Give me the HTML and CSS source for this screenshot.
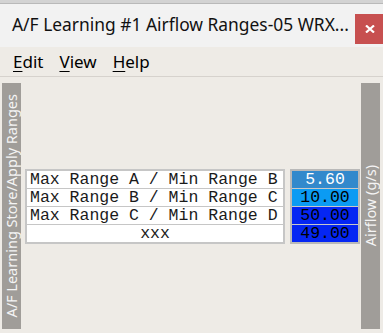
FILE: index.html
```html
<!DOCTYPE html>
<html>
<head>
<meta charset="utf-8">
<link rel="stylesheet" href="styles.css">
</head>
<body>
<div class="window">
  <div class="topstrip"></div>
  <div class="titlebar">
    <span class="title">A/F Learning #1 Airflow Ranges-05 WRX...</span>
    <div class="close"><svg width="10" height="8" viewBox="0 0 10 8"><path d="M1 0.5 L9 7.5 M9 0.5 L1 7.5" stroke="#fff" stroke-width="2.2"/></svg></div>
  </div>
  <div class="menubar">
    <span class="menuitem"><u>E</u>dit</span>
    <span class="menuitem"><u>V</u>iew</span>
    <span class="menuitem"><u>H</u>elp</span>
  </div>
  <div class="content">
    <div class="vbar"><span class="vtext">A/F Learning Store/Apply Ranges</span></div>
    <div class="middle">
      <div class="labels">
        <div class="row">Max Range A / Min Range B</div>
        <div class="row">Max Range B / Min Range C</div>
        <div class="row">Max Range C / Min Range D</div>
        <div class="row center">xxx</div>
      </div>
      <div class="values">
        <div class="val v1">5.60</div>
        <div class="val v2">10.00</div>
        <div class="val v3">50.00</div>
        <div class="val v3">49.00</div>
      </div>
    </div>
    <div class="vbar"><span class="vtext">Airflow (g/s)</span></div>
  </div>
</div>
</body>
</html>
```

FILE: styles.css
```css
html, body {
  margin: 0;
  padding: 0;
  background: #eeebe6;
}
.window {
  width: 383px;
  height: 333px;
  overflow: hidden;
  display: flex;
  flex-direction: column;
  font-family: "Noto Sans", "Open Sans", sans-serif;
}
.topstrip {
  height: 3px;
  background: #d3d3d3;
  border-bottom: 1px solid #b9b9b9;
}
.titlebar {
  height: 43px;
  background: #f2f2f2;
  display: flex;
  align-items: flex-start;
}
.title {
  padding-left: 12px;
  margin-top: 8px;
  font-size: 17.4px;
  line-height: 24px;
  color: #111;
  white-space: nowrap;
}
.close {
  margin-left: auto;
  margin-top: 10px;
  width: 28px;
  height: 30px;
  background: #c75050;
  display: flex;
  align-items: center;
  justify-content: center;
}
.close svg {
  display: block;
  margin-left: 2px;
}
.menubar {
  height: 29px;
  border-bottom: 1px solid #d6d2cd;
  display: flex;
  align-items: flex-start;
  padding-left: 5px;
}
.menuitem {
  font-size: 17px;
  line-height: 24px;
  margin-top: 3px;
  padding: 0 8px;
  color: #000;
}
.menuitem u {
  text-decoration-thickness: 1px;
  text-underline-offset: 3px;
}
.content {
  flex: 1;
  display: flex;
  padding: 6px 3px 4px 2px;
}
.vbar {
  width: 19px;
  background: #a09d99;
  display: flex;
  align-items: center;
  justify-content: center;
}
.vtext {
  writing-mode: vertical-rl;
  transform: rotate(180deg);
  color: #f4f4f4;
  font-size: 14.5px;
  line-height: 19px;
  white-space: nowrap;
}
.middle {
  flex: 1;
  display: flex;
  align-items: center;
  padding-left: 4px;
  padding-right: 1px;
  font-family: "Liberation Mono", "Courier New", monospace;
  font-size: 16.5px;
}
.labels {
  width: 256px;
  border: 2px solid #c6c6c6;
  background: #fff;
}
.row {
  height: 17px;
  line-height: 17px;
  padding-left: 3px;
  border-top: 1px solid #c6c6c6;
  white-space: nowrap;
  color: #1a1a1a;
}
.row:first-child {
  border-top: none;
}
.row.center {
  text-align: center;
  padding-left: 0;
}
.values {
  margin-left: 5px;
  width: 66px;
  border: 2px solid #b9b9b9;
  background: #c8c8c8;
}
.val {
  height: 17px;
  line-height: 17px;
  text-align: center;
  border-top: 1px solid #c8c8c8;
  color: #000;
}
.val:first-child {
  border-top: none;
}
.v1 {
  background: #3289cc;
  color: #fff;
}
.v2 {
  background: #0b9bf3;
}
.v3 {
  background: #0526f3;
}
```
